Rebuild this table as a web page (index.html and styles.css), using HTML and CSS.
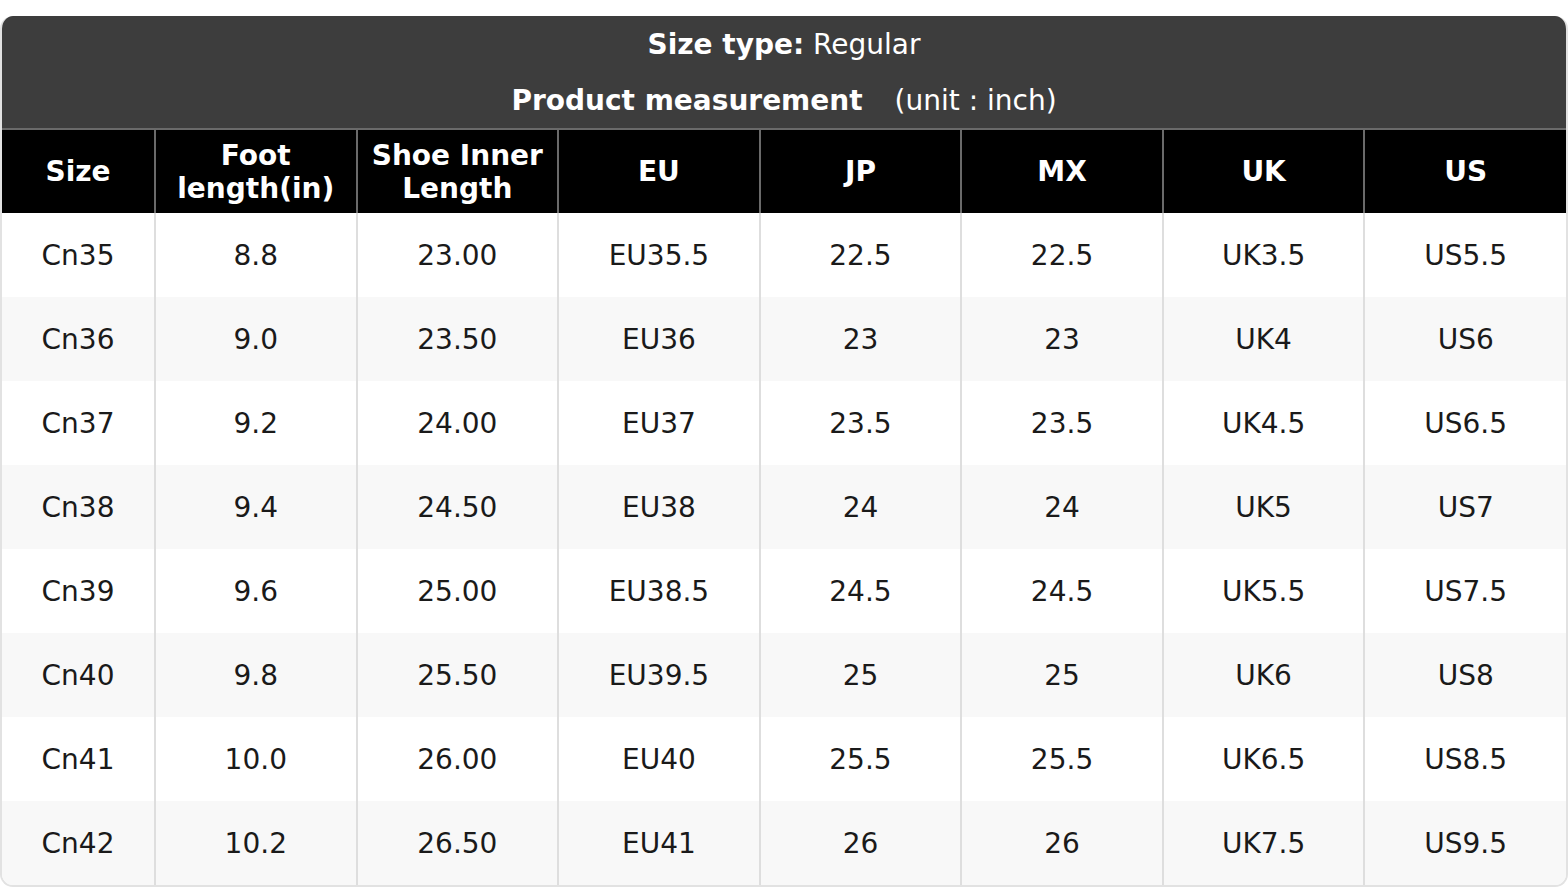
FILE: index.html
```html
<!DOCTYPE html>
<html>
<head>
<meta charset="utf-8">
<link rel="stylesheet" href="styles.css">
</head>
<body>
<div class="chart">
  <div class="title">
    <div class="title-line"><b>Size type:</b> Regular</div>
    <div class="title-line"><b>Product measurement</b><span class="unit">(unit : inch)</span></div>
  </div>
  <table class="sizes">
    <colgroup>
      <col class="c-first"><col><col><col><col><col><col><col>
    </colgroup>
    <thead>
      <tr><th>Size</th><th>Foot<br>length(in)</th><th>Shoe Inner<br>Length</th><th>EU</th><th>JP</th><th>MX</th><th>UK</th><th>US</th></tr>
    </thead>
    <tbody>
      <tr><td>Cn35</td><td>8.8</td><td>23.00</td><td>EU35.5</td><td>22.5</td><td>22.5</td><td>UK3.5</td><td>US5.5</td></tr>
      <tr><td>Cn36</td><td>9.0</td><td>23.50</td><td>EU36</td><td>23</td><td>23</td><td>UK4</td><td>US6</td></tr>
      <tr><td>Cn37</td><td>9.2</td><td>24.00</td><td>EU37</td><td>23.5</td><td>23.5</td><td>UK4.5</td><td>US6.5</td></tr>
      <tr><td>Cn38</td><td>9.4</td><td>24.50</td><td>EU38</td><td>24</td><td>24</td><td>UK5</td><td>US7</td></tr>
      <tr><td>Cn39</td><td>9.6</td><td>25.00</td><td>EU38.5</td><td>24.5</td><td>24.5</td><td>UK5.5</td><td>US7.5</td></tr>
      <tr><td>Cn40</td><td>9.8</td><td>25.50</td><td>EU39.5</td><td>25</td><td>25</td><td>UK6</td><td>US8</td></tr>
      <tr><td>Cn41</td><td>10.0</td><td>26.00</td><td>EU40</td><td>25.5</td><td>25.5</td><td>UK6.5</td><td>US8.5</td></tr>
      <tr><td>Cn42</td><td>10.2</td><td>26.50</td><td>EU41</td><td>26</td><td>26</td><td>UK7.5</td><td>US9.5</td></tr>
    </tbody>
  </table>
</div>
</body>
</html>
```
FILE: styles.css
```css
html, body {
  margin: 0;
  padding: 0;
  background: #fff;
}
body {
  padding-top: 16px;
  font-family: "DejaVu Sans", sans-serif;
  font-size: 28px;
}
.chart {
  width: 1568px;
  box-sizing: border-box;
  border-radius: 13px;
  overflow: hidden;
  border: 2px solid #e2e2e2;
  border-top: none;
}
.title {
  background: #3d3d3d;
  color: #fff;
  text-align: center;
  height: 112px;
  box-sizing: border-box;
  padding-top: 1px;
  margin: 0 -2px;
}
.title-line {
  height: 56px;
  line-height: 56px;
}
.unit {
  margin-left: 32px;
}
.sizes {
  width: 100%;
  border-collapse: collapse;
  table-layout: fixed;
}
.c-first {
  width: 153px;
}
.sizes th {
  background: #000;
  color: #fff;
  font-weight: bold;
  height: 84px;
  line-height: 33px;
  padding: 0 2px;
  border-top: 2px solid #6a6a6a;
  border-left: 2px solid #6a6a6a;
  box-sizing: border-box;
}
.sizes th:first-child {
  border-left: none;
}
.sizes td {
  height: 84px;
  padding: 0;
  text-align: center;
  color: #1a1a1a;
  border-left: 2px solid #dedede;
  box-sizing: border-box;
}
.sizes td:first-child {
  border-left: none;
}
.sizes tbody tr:nth-child(even) td {
  background: #f8f8f8;
}
```
